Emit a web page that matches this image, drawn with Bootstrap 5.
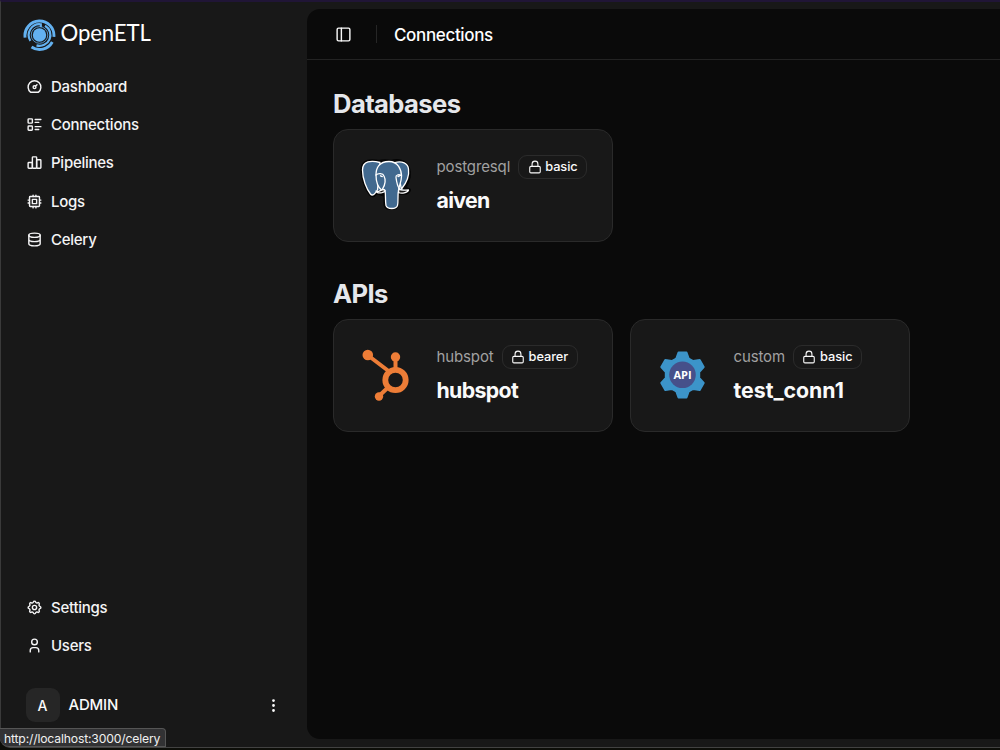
<!DOCTYPE html>
<html lang="en" data-bs-theme="dark">
<head>
<meta charset="utf-8">
<meta name="viewport" content="width=device-width, initial-scale=1">
<title>OpenETL – Connections</title>
<link href="https://cdn.jsdelivr.net/npm/bootstrap@5.3.0/dist/css/bootstrap.min.css" rel="stylesheet">
<style>
  body { background: #181818; color: #fafafa; font-family: Inter, "Liberation Sans", sans-serif; font-size: 15px; overflow: hidden; }
  .under { background: #0d0e09; height: 750px; }
  .shell { height: 748px; background: #181818; border-top: 2px solid #201536; border-left: 1px solid #3a3a3a; border-bottom: 1px solid #424242; border-bottom-left-radius: 10px; }
  .ico { fill: none; stroke: currentColor; stroke-width: 2; stroke-linecap: round; stroke-linejoin: round; width: 17px; height: 17px; flex: none; display: block; }
  .side { width: 306px; padding: 14px 17px 0 16.5px; }
  .brand { padding-left: 5px; height: 38px; gap: 5px; font: 400 22.2px/38px Lato, sans-serif; letter-spacing: -.15px; }
  .brand span { margin-top: -4px; }
  .side .nav-link { height: 38.4px; padding: 0 8px; gap: 8.500px; color: #f4f4f5; line-height: 20px; font-weight: 450; letter-spacing: -.26px; }
  .nav-link span, .user-name { padding-top: 1px; }
  .side-top { margin-top: 13px; }
  .user { margin: 23px 8px 25px; }
  .user-name { font-weight: 500; letter-spacing: -.2px; margin-left: 1px; }
  .avatar { width: 34px; height: 34px; border-radius: 9px; background: #262626; font-size: 14px; font-weight: 450; padding-top: 1px; }
  .main { background: #0a0a0a; margin-top: 7px; height: 730px; border-radius: 13px 0 0 13px; }
  .topbar { height: 51px; border-bottom: 1px solid #232323; padding-left: 28px; }
  .rule { width: 1px; height: 18px; background: #262626; margin: 0 17px 0 24px; }
  .topbar h1 { font-size: 17px; font-weight: 550; line-height: 24px; letter-spacing: -.35px; padding-top: 1px; }
  h2 { font-size: 25.6px; font-weight: 700; line-height: 34px; color: #e5e7eb; letter-spacing: -.6px; }
  .content { padding: 27px 0 0 26px; }
  .cards { margin-top: 7.500px; gap: 17.500px; }
  .second { margin-top: 35.500px; }
  .conn { width: 279.500px; height: 113px; border: 1px solid #2a2a2a; border-radius: 15px; background: #181818; padding: 25px 0 0 24.5px; display: flex; }
  .logo { width: 54px; height: 60px; flex: none; margin-right: 24px; }
  .kind { color: #a1a1a1; font-size: 15px; letter-spacing: -.13px; padding-top: 1px; }
  .tag { height: 24px; padding: 0 8.500px; border: 1px solid #2b2b2b; border-radius: 9px; font-size: 12.8px; font-weight: 550; gap: 3.500px; letter-spacing: -.05px; }
  .tag .ico { width: 14px; height: 14px; stroke-width: 1.9; }
  .cname { font-size: 21.3px; font-weight: 650; line-height: 30px; margin-top: 6.500px; letter-spacing: -.65px; }
  .cname.wide { letter-spacing: -.02px; }
  .status { position: absolute; left: 0; bottom: 3px; height: 19px; width: 166px; background: #323234; border: 1px solid #555; border-left: 0; border-radius: 0 4px 0 9px; font-size: 12.2px; letter-spacing: -.17px; line-height: 20px; padding-left: 4px; color: #f0f0f0; white-space: nowrap; }
</style>
</head>
<body>
<div class="under">
<div class="shell d-flex">
  <aside class="side d-flex flex-column flex-shrink-0">
    <a class="brand d-flex align-items-center text-white text-decoration-none" href="#">
      <svg width="33" height="34" viewBox="0 0 33 34" fill="none" stroke="#63b1f0">
        <circle cx="16.500" cy="17" r="6.700" fill="#63b1f0" stroke="none"/>
        <circle cx="16.500" cy="17" r="8.300" stroke-width=".8"/>
        <path d="M2.100 19.600A14.500 14.500 0 1 1 30.900 18.800" stroke-width="2.900"/>
        <path d="M29.300 24A14.500 14.500 0 0 1 8.500 29" stroke-width="2.900"/>
        <path d="M7.400 22.800A10.800 10.800 0 0 1 17.800 6.300V9" stroke-width="2.200"/>
        <path d="M22 7.700A10.800 10.800 0 0 1 13.500 27.400" stroke-width="2.200"/>
      </svg>
      <span>OpenETL</span>
    </a>
    <nav class="side-top nav flex-column">
      <a class="nav-link d-flex align-items-center" href="#"><svg class="ico" viewBox="0 0 24 24"><path d="M10 13a2 2 0 1 0 4 0a2 2 0 1 0-4 0M13.45 11.55l2.05-2.05M6.4 20a9 9 0 1 1 11.2 0z"/></svg><span>Dashboard</span></a>
      <a class="nav-link d-flex align-items-center" href="#"><svg class="ico" viewBox="0 0 24 24"><path d="M13 5h8M13 9h5M13 15h8M13 19h5"/><rect x="3" y="4" width="6" height="6" rx="1"/><rect x="3" y="14" width="6" height="6" rx="1"/></svg><span>Connections</span></a>
      <a class="nav-link d-flex align-items-center" href="#"><svg class="ico" viewBox="0 0 24 24"><rect x="3" y="12" width="6" height="8" rx="1"/><rect x="9" y="4" width="6" height="16" rx="1"/><rect x="15" y="8" width="6" height="12" rx="1"/></svg><span>Pipelines</span></a>
      <a class="nav-link d-flex align-items-center" href="#"><svg class="ico" viewBox="0 0 24 24"><rect x="5" y="5" width="14" height="14" rx="1"/><path d="M9 9h6v6H9zM3 10h2M3 14h2M10 3v2M14 3v2M21 10h-2M21 14h-2M14 21v-2M10 21v-2"/></svg><span>Logs</span></a>
      <a class="nav-link d-flex align-items-center" href="#"><svg class="ico" viewBox="0 0 24 24"><ellipse cx="12" cy="6" rx="8" ry="3"/><path d="M4 6v6a8 3 0 0 0 16 0V6M4 12v6a8 3 0 0 0 16 0v-6"/></svg><span>Celery</span></a>
    </nav>
    <nav class="nav flex-column mt-auto">
      <a class="nav-link d-flex align-items-center" href="#"><svg class="ico" viewBox="0 0 24 24"><path d="M10.325 4.317c.426-1.756 2.924-1.756 3.35 0a1.724 1.724 0 0 0 2.573 1.066c1.543-.94 3.31.826 2.37 2.37a1.724 1.724 0 0 0 1.065 2.572c1.756.426 1.756 2.924 0 3.35a1.724 1.724 0 0 0-1.066 2.573c.94 1.543-.826 3.31-2.37 2.37a1.724 1.724 0 0 0-2.572 1.065c-.426 1.756-2.924 1.756-3.35 0a1.724 1.724 0 0 0-2.573-1.066c-1.543.94-3.31-.826-2.37-2.37a1.724 1.724 0 0 0-1.065-2.572c-1.756-.426-1.756-2.924 0-3.35a1.724 1.724 0 0 0 1.066-2.573c-.94-1.543.826-3.31 2.37-2.37c1 .608 2.296.07 2.572-1.065z"/><circle cx="12" cy="12" r="3"/></svg><span>Settings</span></a>
      <a class="nav-link d-flex align-items-center" href="#"><svg class="ico" viewBox="0 0 24 24"><circle cx="12" cy="7" r="4"/><path d="M6 21v-2a4 4 0 0 1 4-4h4a4 4 0 0 1 4 4v2"/></svg><span>Users</span></a>
    </nav>
    <div class="user d-flex align-items-center">
      <div class="avatar d-flex align-items-center justify-content-center me-2">A</div>
      <span class="user-name">ADMIN</span>
      <svg class="ico ms-auto" viewBox="0 0 24 24"><path d="M12 11a1 1 0 1 0 0 2a1 1 0 1 0 0-2M12 18a1 1 0 1 0 0 2a1 1 0 1 0 0-2M12 4a1 1 0 1 0 0 2a1 1 0 1 0 0-2"/></svg>
    </div>
  </aside>

  <main class="main flex-grow-1">
    <header class="topbar d-flex align-items-center">
      <svg class="ico" viewBox="0 0 24 24"><rect x="3" y="3" width="18" height="18" rx="2"/><path d="M9 3v18"/></svg>
      <span class="rule"></span>
      <h1 class="m-0">Connections</h1>
    </header>
    <div class="content">
      <h2 class="mb-0">Databases</h2>
      <div class="cards d-flex">
        <article class="conn">
          <svg class="logo" viewBox="0 0 54 60" fill="#41698f" stroke="#fff" stroke-width="1.3" stroke-linejoin="round" stroke-linecap="round">
            <path stroke="#050505" stroke-width="4" d="M20 7C11 5 3.500 6 3.500 15c0 9 4 19 8 24 2 2.500 4 1 6-2l9 3v10c1 4 10 4 11.500 0V37c3 2 11 1 12-2l-5-2c5-7 6-15 4-20-3-7-10-8-17-6-4-1-8-1-12 0z"/>
            <path d="M36 7.500c7-2 13 1 13.500 6.500 1 7-3 15-7 20-2-5-1-17-6.500-26.500z"/>
            <path d="M21 7.500C12 5 3.500 6 3.500 15c0 9 4 19 8 24 2 2.500 4.500 0 7-4z"/>
            <path d="M17 20C17 13 20 6.500 30 6.500c9 0 12.500 8 12.500 15 0 6-3 10-3 14-1 5 0 11-1 15-1.500 4-10 4-11.500 0-1-5 0-10-1-15h-3c-4-3-6-8-6-15.500z"/>
            <path fill="none" d="M17 20c2-2 7-2 8 1 2 4 1 9-1.500 13M42.500 20.500c-3-1.500-6-.5-5.500 2 .5 4 1 8 3.500 11.500M21.500 20.800l1.800.8M40.500 21l-1.500.6"/>
            <path fill="#181818" d="M17 36c2 2 5-1.500 7.500-1.500 2.500.5 1.500 2.500-1.500 3.200-3 .5-5.500-.2-6-1.700zM40 34c2 2 6 1 9.500 1-1 3-7 4-10 2.500z"/>
          </svg>
          <div>
            <div class="d-flex align-items-center gap-2"><span class="kind">postgresql</span><span class="tag d-inline-flex align-items-center"><svg class="ico" viewBox="0 0 24 24"><rect x="3" y="11" width="18" height="11" rx="2"/><path d="M7 11V7a5 5 0 0 1 10 0v4"/></svg><span>basic</span></span></div>
            <div class="cname">aiven</div>
          </div>
        </article>
      </div>
      <h2 class="second mb-0">APIs</h2>
      <div class="cards d-flex">
        <article class="conn">
          <svg class="logo" viewBox="0 0 54 60" stroke="#ed7d37" fill="#ed7d37">
            <circle cx="36.500" cy="35" r="10.200" fill="none" stroke-width="5.800"/>
            <path d="M8.500 10L29.500 26M36.500 12v14M29.500 42L20 51" fill="none" stroke-width="4"/>
            <g stroke="none"><circle cx="8.800" cy="10" r="5.300"/><circle cx="36.500" cy="12" r="4.700"/><circle cx="20" cy="51.500" r="4.200"/></g>
          </svg>
          <div>
            <div class="d-flex align-items-center gap-2"><span class="kind">hubspot</span><span class="tag d-inline-flex align-items-center"><svg class="ico" viewBox="0 0 24 24"><rect x="3" y="11" width="18" height="11" rx="2"/><path d="M7 11V7a5 5 0 0 1 10 0v4"/></svg><span>bearer</span></span></div>
            <div class="cname">hubspot</div>
          </div>
        </article>
        <article class="conn">
          <svg class="logo" viewBox="0 0 54 60">
            <path fill="#3c94c9" stroke="#3c94c9" stroke-width="2" stroke-linejoin="round" d="M22.500 7.500h8l2.200 6 4.500 2.500 6.500-1 4 7-4.500 5v6l4.500 5-4 7-6.500-1-4.500 2.500-2.200 6h-8l-2.200-6-4.500-2.500-6.500 1-4-7 4.500-5v-6l-4.500-5 4-7 6.500 1 4.500-2.500z"/>
            <circle cx="26.500" cy="29.800" r="13.300" fill="#46508a"/>
            <text x="26.500" y="33.500" text-anchor="middle" font-family="Open Sans, sans-serif" font-weight="700" font-size="11" fill="#fff">API</text>
          </svg>
          <div>
            <div class="d-flex align-items-center gap-2"><span class="kind">custom</span><span class="tag d-inline-flex align-items-center"><svg class="ico" viewBox="0 0 24 24"><rect x="3" y="11" width="18" height="11" rx="2"/><path d="M7 11V7a5 5 0 0 1 10 0v4"/></svg><span>basic</span></span></div>
            <div class="cname wide">test_conn1</div>
          </div>
        </article>
      </div>
    </div>
  </main>
</div>
</div>
<div class="status">http://localhost:3000/celery</div>
<script src="https://cdn.jsdelivr.net/npm/bootstrap@5.3.0/dist/js/bootstrap.bundle.min.js"></script>
</body>
</html>
